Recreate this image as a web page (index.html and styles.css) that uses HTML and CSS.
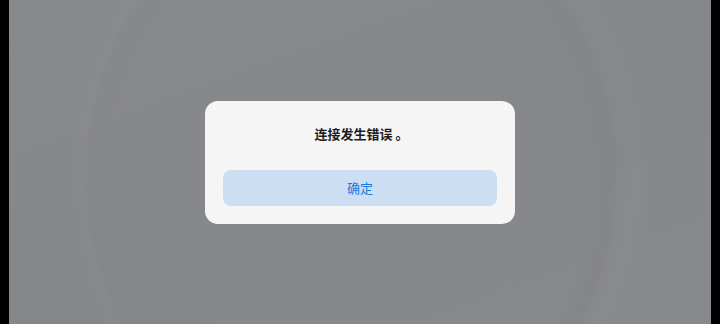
FILE: index.html
```html
<!DOCTYPE html>
<html lang="zh-CN">
<head>
<meta charset="utf-8">
<title>连接错误</title>
<link rel="stylesheet" href="styles.css">
</head>
<body>
<div class="screen">
  <div class="dialog">
    <p class="message">连接发生错误 。</p>
    <button class="confirm" type="button">确定</button>
  </div>
</div>
</body>
</html>
```

FILE: styles.css
```css
html, body {
  margin: 0;
  padding: 0;
  background: #000;
}
body {
  width: 720px;
  height: 324px;
  overflow: hidden;
  font-family: "Noto Sans CJK SC", "Noto Sans", sans-serif;
}
.screen {
  margin: 0 9px;
  height: 324px;
  display: flex;
  align-items: center;
  justify-content: center;
  background:
    radial-gradient(ellipse 290px 320px at 350px 175px, rgba(0,0,0,0) 88%, rgba(255,255,255,0.022) 95%, rgba(0,0,0,0) 100%),
    radial-gradient(ellipse 270px 300px at 340px 180px, rgba(0,0,0,0) 90%, rgba(0,0,0,0.02) 96%, rgba(0,0,0,0) 100%),
    linear-gradient(160deg, rgba(255,255,255,0.015), rgba(0,0,0,0) 50%, rgba(255,255,255,0.012)),
    #86878b;
}
.dialog {
  width: 310px;
  box-sizing: border-box;
  padding: 23px 18px 18px;
  background: #f5f5f5;
  border-radius: 13px;
  display: flex;
  flex-direction: column;
  align-items: stretch;
  gap: 26px;
}
.message {
  margin: 0;
  text-align: center;
  font-size: 13px;
  line-height: 20px;
  font-weight: 700;
  color: #1c1c1c;
  padding-left: 3px;
}
.confirm {
  height: 36px;
  border: none;
  border-radius: 8px;
  background: #ccdef2;
  color: #1a78e0;
  font-family: "Noto Sans CJK SC", "Noto Sans", sans-serif;
  font-size: 13px;
  padding: 0;
}
```
